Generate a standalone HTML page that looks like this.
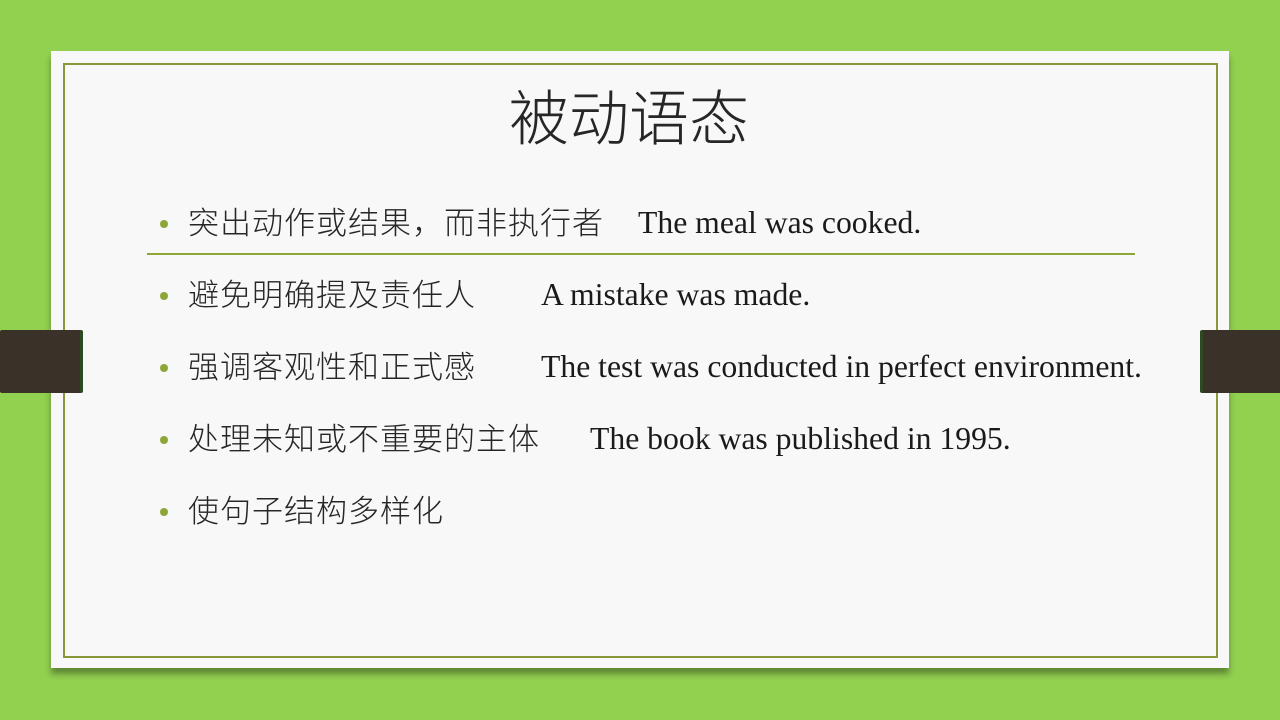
<!DOCTYPE html>
<html><head><meta charset="utf-8"><style>
body{margin:0;width:1280px;height:720px;background:#92d050;position:relative;overflow:hidden;font-family:"Liberation Sans","Noto Sans CJK SC",sans-serif}
.card{position:absolute;left:51px;top:51px;width:1178px;height:617px;background:#f8f8f8;box-shadow:0 6px 6px rgba(0,0,0,0.35)}
.inner{position:absolute;left:63px;top:63px;width:1151px;height:591px;border:2px solid #86983a}
.bar{position:absolute;top:330px;height:63px;background:#3a3128;width:80px;border-radius:2px}
.title{position:absolute;left:0;width:1258px;top:82px;text-align:center;font-size:60px;color:#262626;line-height:76px;font-weight:300}
.row{position:absolute;left:188px;font-size:31px;letter-spacing:1px;color:#262626;line-height:40px;white-space:nowrap;font-weight:300}
.row::before{content:"";position:absolute;left:-28px;top:16px;width:8px;height:8px;border-radius:50%;background:#8ea638}
.en{position:absolute;font-family:"Liberation Serif",serif;font-size:31.7px;color:#1a1a1a;line-height:40px;white-space:nowrap}
.line{position:absolute;left:147px;top:253px;width:988px;height:2px;background:#8ea638}
</style></head><body>
<div class="card"></div>
<div class="inner"></div>
<div class="bar" style="left:0;border-right:3px solid #2e4a22"></div>
<div class="bar" style="left:1200px;border-left:3px solid #2e4a22"></div>
<div class="title">被动语态</div>
<div class="row" style="top:204px">突出动作或结果，而非执行者</div>
<div class="en" style="left:638px;top:203px">The meal was cooked.</div>
<div class="line"></div>
<div class="row" style="top:276px">避免明确提及责任人</div>
<div class="en" style="left:541px;top:275px">A mistake was made.</div>
<div class="row" style="top:348px">强调客观性和正式感</div>
<div class="en" style="left:541px;top:347px">The test was conducted in perfect environment.</div>
<div class="row" style="top:420px">处理未知或不重要的主体</div>
<div class="en" style="left:590px;top:419px">The book was published in 1995.</div>
<div class="row" style="top:492px">使句子结构多样化</div>
</body></html>
